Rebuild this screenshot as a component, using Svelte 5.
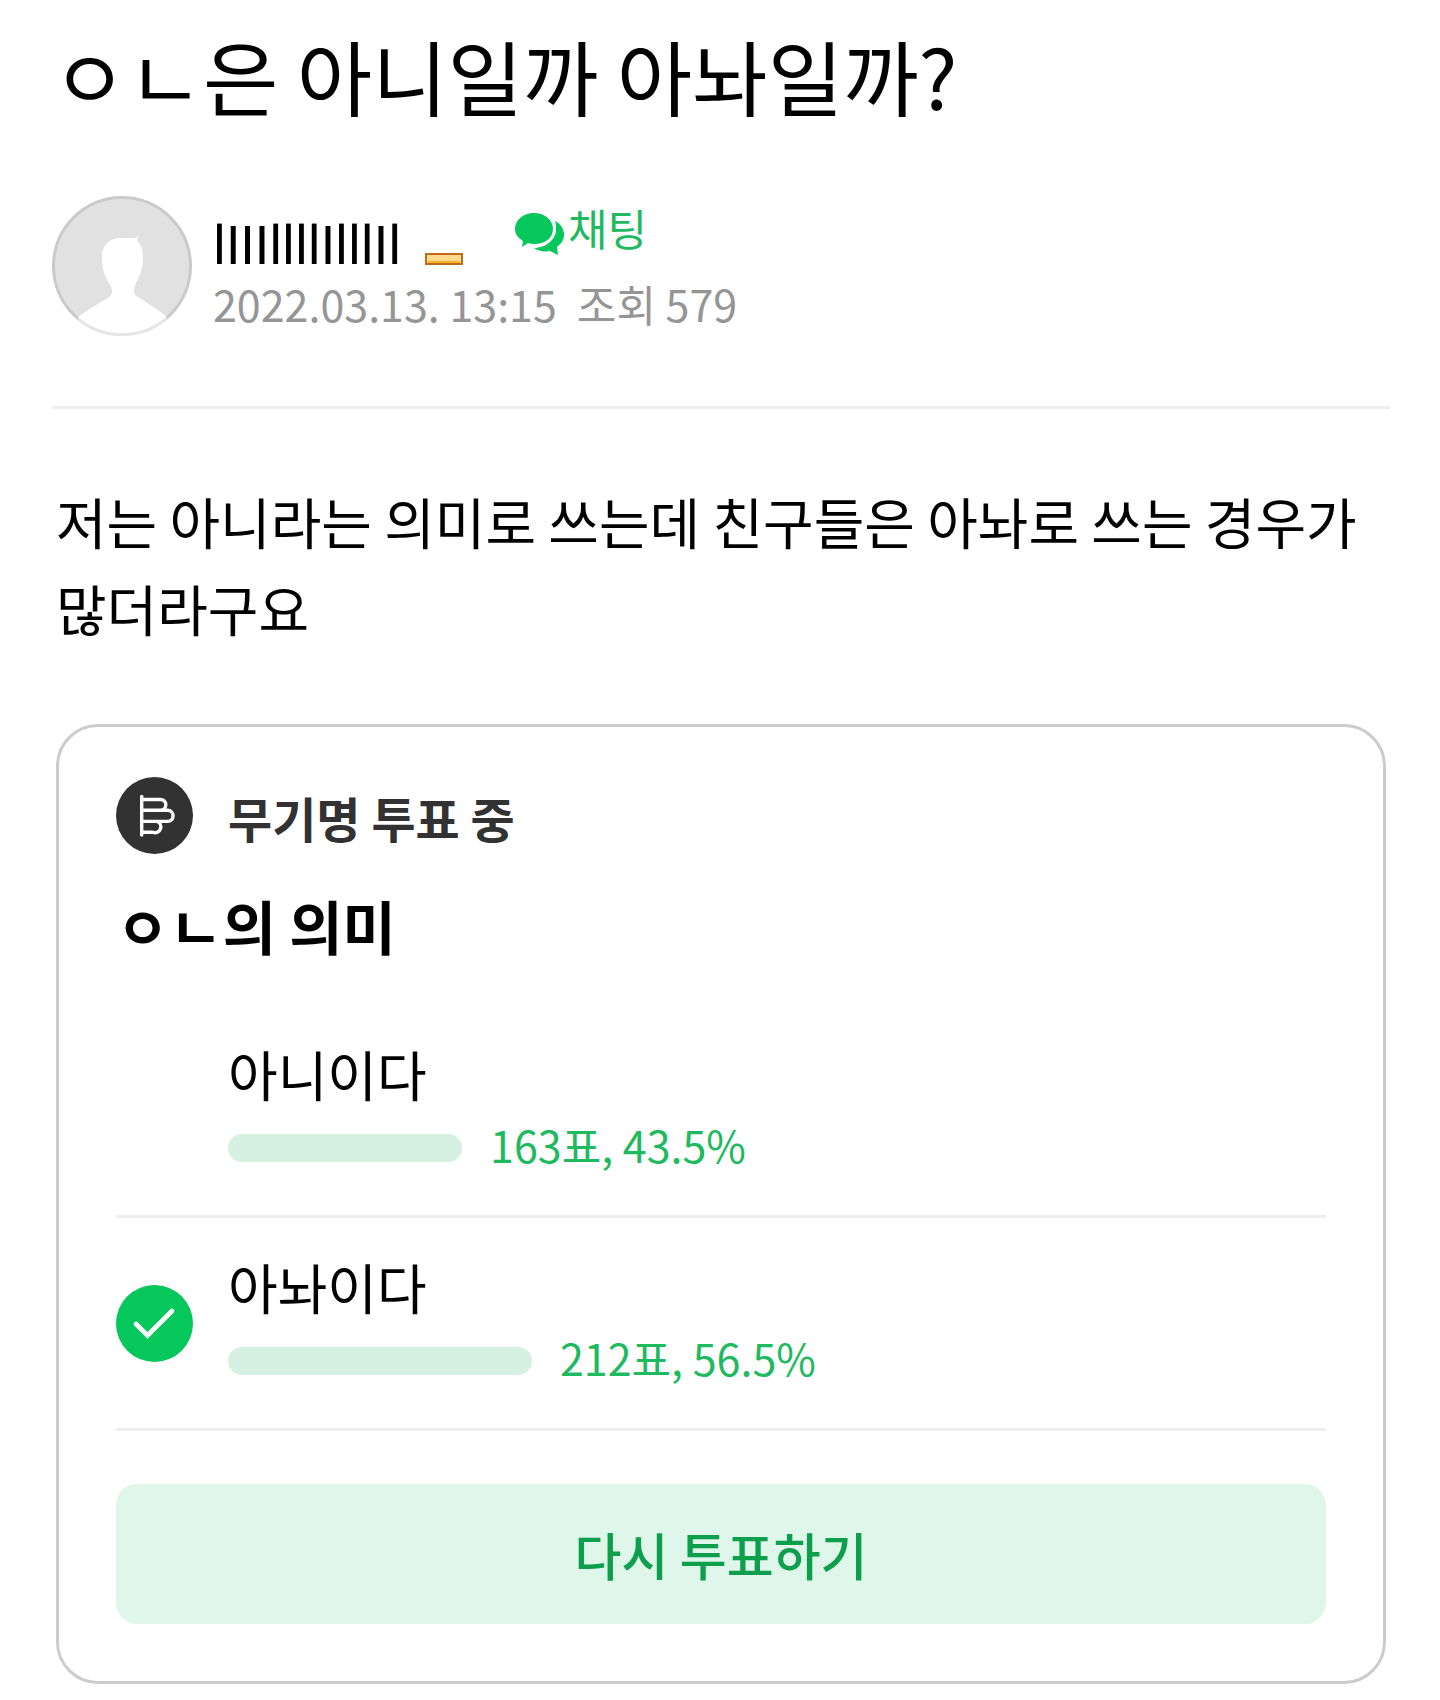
<script lang="ts">
  type Option = { label: string; votes: number; percent: string; picked: boolean };

  const options: Option[] = [
    { label: "아니이다", votes: 163, percent: "43.5", picked: false },
    { label: "아놔이다", votes: 212, percent: "56.5", picked: true },
  ];

  // 막대는 100%일 때 행 너비의 49%를 차지
  const BAR_RATIO = 0.49;
</script>

<main class="post">
  <h1 class="post__title">ㅇㄴ은 아니일까 아놔일까?</h1>

  <header class="profile">
    <svg class="profile__avatar" viewBox="0 0 140 140" aria-hidden="true">
      <defs>
        <clipPath id="avatar-clip"><circle cx="70" cy="70" r="70" /></clipPath>
      </defs>
      <g clip-path="url(#avatar-clip)">
        <rect width="140" height="140" fill="#e1e1e1" />
        <path fill="#fff" d="M26 121C38 112 50 106 57 101Q60 99 60 95Q60 91 57 87C52 79 50 72 50 62C50 49 57 42 69 42H83L87 40Q84 43 86 46C90 50 91 55 91 62C91 72 88 80 84 87Q82 91 82 95Q82 99 86 101C94 106 105 113 115 121V140H26Z" />
      </g>
      <circle cx="70" cy="70" r="68.5" fill="none" stroke="#000" stroke-opacity="0.1" stroke-width="3" />
    </svg>
    <div class="profile__info">
      <div class="profile__row">
        <span class="profile__name">lIIIllllIlllIl</span>
        <svg class="profile__level" viewBox="0 0 38 12" aria-hidden="true">
          <rect x="1" y="1" width="36" height="10" fill="#ffd98c" stroke="#c06a1c" stroke-width="2" />
          <path d="M3 9h32" stroke="#f5b02e" stroke-width="2" />
        </svg>
        <a class="chat" href="#chat">
          <svg class="chat__icon" viewBox="0 0 50 42" aria-hidden="true">
            <path fill="#06c75b" d="M40 8C46 11 49 16 49 22C49 27 46 31 42 34L43 42L35 38C29 39 23 38 19 35C31 35 41 26 41 17C41 14 41 11 40 8Z" />
            <path fill="#06c75b" d="M19 0C30 0 38 7 38 16C38 25 30 31 19 31Q16 31 13 30L7 34L8 28C3 25 0 21 0 16C0 7 8 0 19 0Z" />
          </svg>채팅</a>
      </div>
      <div class="profile__meta">
        <time datetime="2022-03-13T13:15">2022.03.13. 13:15</time>
        <span>조회 579</span>
      </div>
    </div>
  </header>

  <p class="post__body">저는 아니라는 의미로 쓰는데 친구들은 아놔로 쓰는 경우가 많더라구요</p>

  <section class="poll">
    <div class="poll__head">
      <svg class="poll__icon" viewBox="0 0 77 77" aria-hidden="true">
        <circle cx="38.5" cy="38.5" r="38.5" fill="#323232" />
        <g fill="none" stroke="#fff" stroke-width="3.4" stroke-linecap="round">
          <path d="M25.7 19.5V58" />
          <path d="M26 22.5H44.5A5.3 5.3 0 0 1 44.5 33.2H26M46 33.2H51.5A5.6 5.6 0 0 1 51.5 44.4H26M41 44.4A5.6 5.6 0 0 1 37 55.3H26" />
        </g>
      </svg>
      <span class="poll__status">무기명 투표 중</span>
    </div>
    <h2 class="poll__title">ㅇㄴ의 의미</h2>

    <ul class="poll__list">
      {#each options as o}
        <li class="option">
          <span class="option__mark">
            {#if o.picked}
              <svg class="poll__icon" viewBox="0 0 77 77" role="img" aria-label="선택함">
                <circle cx="38.5" cy="38.5" r="38.5" fill="#06c75b" />
                <path d="M20 39L31.5 50.5L56 26" fill="none" stroke="#fff" stroke-width="4.6" stroke-linecap="round" />
              </svg>
            {/if}
          </span>
          <div class="option__content">
            <div class="option__label">{o.label}</div>
            <div class="option__result">
              <span class="option__bar" style="width: {Number(o.percent) * BAR_RATIO}%"></span>
              <span class="option__count">{o.votes}표, {o.percent}%</span>
            </div>
          </div>
        </li>
      {/each}
    </ul>

    <button class="poll__button" type="button">다시 투표하기</button>
  </section>
</main>

<style>
  :global(body) {
    margin: 0;
    background: #fff;
  }

  .post {
    padding: 15px 50px 16px 52px;
    font-family: "Noto Sans CJK KR", sans-serif;
    color: #000;
  }

  .post__title {
    margin: 0;
    font-size: 82px;
    font-weight: 400;
    line-height: 120px;
  }

  /* 작성자 */
  .profile {
    display: flex;
    gap: 21px;
    padding: 61px 0 70px;
    border-bottom: 3px solid #eee;
  }

  .profile__avatar {
    flex-shrink: 0;
    width: 140px;
    height: 140px;
  }

  .profile__row {
    display: flex;
    height: 76px;
  }

  .profile__name {
    align-self: flex-end;
    font-family: Roboto, sans-serif;
    font-size: 53px;
    line-height: 52px;
  }

  .profile__level {
    align-self: flex-end;
    width: 38px;
    height: 12px;
    margin: 0 52px 7px 24px;
  }

  .chat {
    display: flex;
    align-items: center;
    align-self: flex-start;
    gap: 3px;
    font-size: 43px;
    line-height: 62px;
    color: #1fba60;
    text-decoration: none;
  }

  .chat__icon {
    width: 50px;
    height: 42px;
    margin-top: 14px;
  }

  .profile__meta {
    display: flex;
    gap: 20px;
    font-size: 43px;
    line-height: 62px;
    color: #959595;
  }

  .post__body {
    margin: 68px 0 73px;
    padding: 0 4px;
    font-size: 55px;
    line-height: 87px;
    word-break: keep-all;
  }

  /* 투표 */
  .poll {
    margin: 0 4px;
    padding: 50px 57px 57px;
    border: 3px solid #ccc;
    border-radius: 42px;
  }

  .poll__head {
    display: flex;
    align-items: center;
    gap: 35px;
  }

  .poll__icon {
    display: block;
    width: 77px;
    height: 77px;
  }

  .poll__status {
    padding-top: 2px;
    font-size: 48px;
    font-weight: 700;
    line-height: 60px;
    color: #323232;
  }

  .poll__title {
    margin: 29px 0 38px;
    font-size: 58px;
    font-weight: 700;
    line-height: 84px;
  }

  .poll__list {
    margin: 0 0 53px;
    padding: 0;
    list-style: none;
  }

  .option {
    display: flex;
    align-items: center;
    gap: 35px;
    border-bottom: 3px solid #eee;
  }

  .option__mark {
    flex-shrink: 0;
    width: 77px;
  }

  .option__content {
    flex: 1;
    padding: 29px 0 41px;
  }

  .option__label {
    font-size: 54px;
    line-height: 80px;
  }

  .option__result {
    display: flex;
    align-items: center;
    gap: 28px;
    font-size: 43px;
    line-height: 60px;
    color: #1fba60;
  }

  .option__bar {
    height: 28px;
    margin-top: 8px;
    border-radius: 14px;
    background: #d6f0e1;
  }

  .poll__button {
    display: block;
    width: 100%;
    height: 140px;
    padding: 0;
    border: none;
    border-radius: 21px;
    background: #dff7ea;
    font: inherit;
    font-size: 51px;
    font-weight: 500;
    color: #0d9f4b;
    cursor: pointer;
  }
</style>
